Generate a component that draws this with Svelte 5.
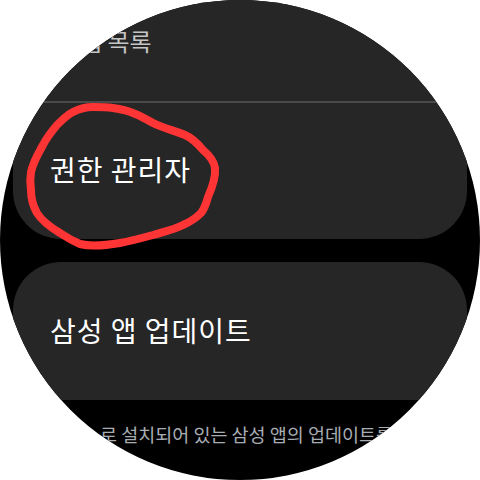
<script lang="ts">
	const scribble =
		'M113 108 C120 109 126 110 133 113 C141 116 147 120 153 123 C163 128 175 131 185 135 C192 138 198 144 203 150 C209 155 214 161 215 168 C216 178 212 188 208 197 C206 204 205 208 201 213 C196 218 190 222 183 225 C173 230 163 232 153 235 C142 238 131 241 120 243 C108 245 92 247 80 244 C73 241 66 237 60 233 C50 227 42 221 37 213 C33 206 31 198 31 190 C30 183 30 178 31 172 C33 162 38 154 43 145 C47 137 52 131 57 125 C62 120 67 115 73 112 C79 109 86 107 93 107 C100 107 106 107 113 108';
</script>

<div class="screen">
	<section class="card top">
		<div class="row first"><span>앱 목록</span></div>
		<div class="row main lifted"><span>권한 관리자</span></div>
	</section>

	<section class="card update">
		<div class="row main"><span>삼성 앱 업데이트</span></div>
	</section>

	<p class="note">로 설치되어 있는 삼성 앱의 업데이트를</p>

	<svg class="scribble" viewBox="0 0 480 480" width="480" height="480" aria-hidden="true">
		<path d={scribble} />
	</svg>
</div>

<style>
	:global(body) {
		background: #fff;
	}

	.screen {
		position: relative;
		width: 480px;
		height: 480px;
		border-radius: 50%;
		overflow: hidden;
		background: #000;
		display: flex;
		flex-direction: column;
		gap: 23px;
		padding: 0 13px;
		box-sizing: border-box;
		font-family: 'Noto Sans CJK KR', 'Noto Sans', sans-serif;
	}

	.card {
		background: #262626;
		flex: none;
	}

	.top {
		height: 239px;
		border-radius: 0 0 48px 48px;
	}

	.update {
		height: 138px;
		border-radius: 48px 48px 0 0;
	}

	.row {
		display: flex;
		align-items: center;
		box-sizing: border-box;
	}

	.first {
		height: 103px;
		padding: 0 0 20px 67px;
		border-bottom: 2px solid #4a4a4a;
		color: #c4c4c4;
		font-size: 24px;
	}

	.main {
		height: 136px;
		padding: 0 0 0 37px;
		color: #fff;
		font-size: 28px;
		letter-spacing: 1px;
	}

	.lifted {
		padding-bottom: 4px;
	}

	.note {
		margin: -1px 0 0;
		padding-left: 87px;
		color: #a8adb3;
		font-size: 18.5px;
		line-height: 24px;
		white-space: nowrap;
	}

	.scribble {
		position: absolute;
		top: 0;
		left: 0;
	}

	.scribble path {
		fill: none;
		stroke: #ff3434;
		stroke-width: 8;
		stroke-linejoin: round;
	}
</style>
